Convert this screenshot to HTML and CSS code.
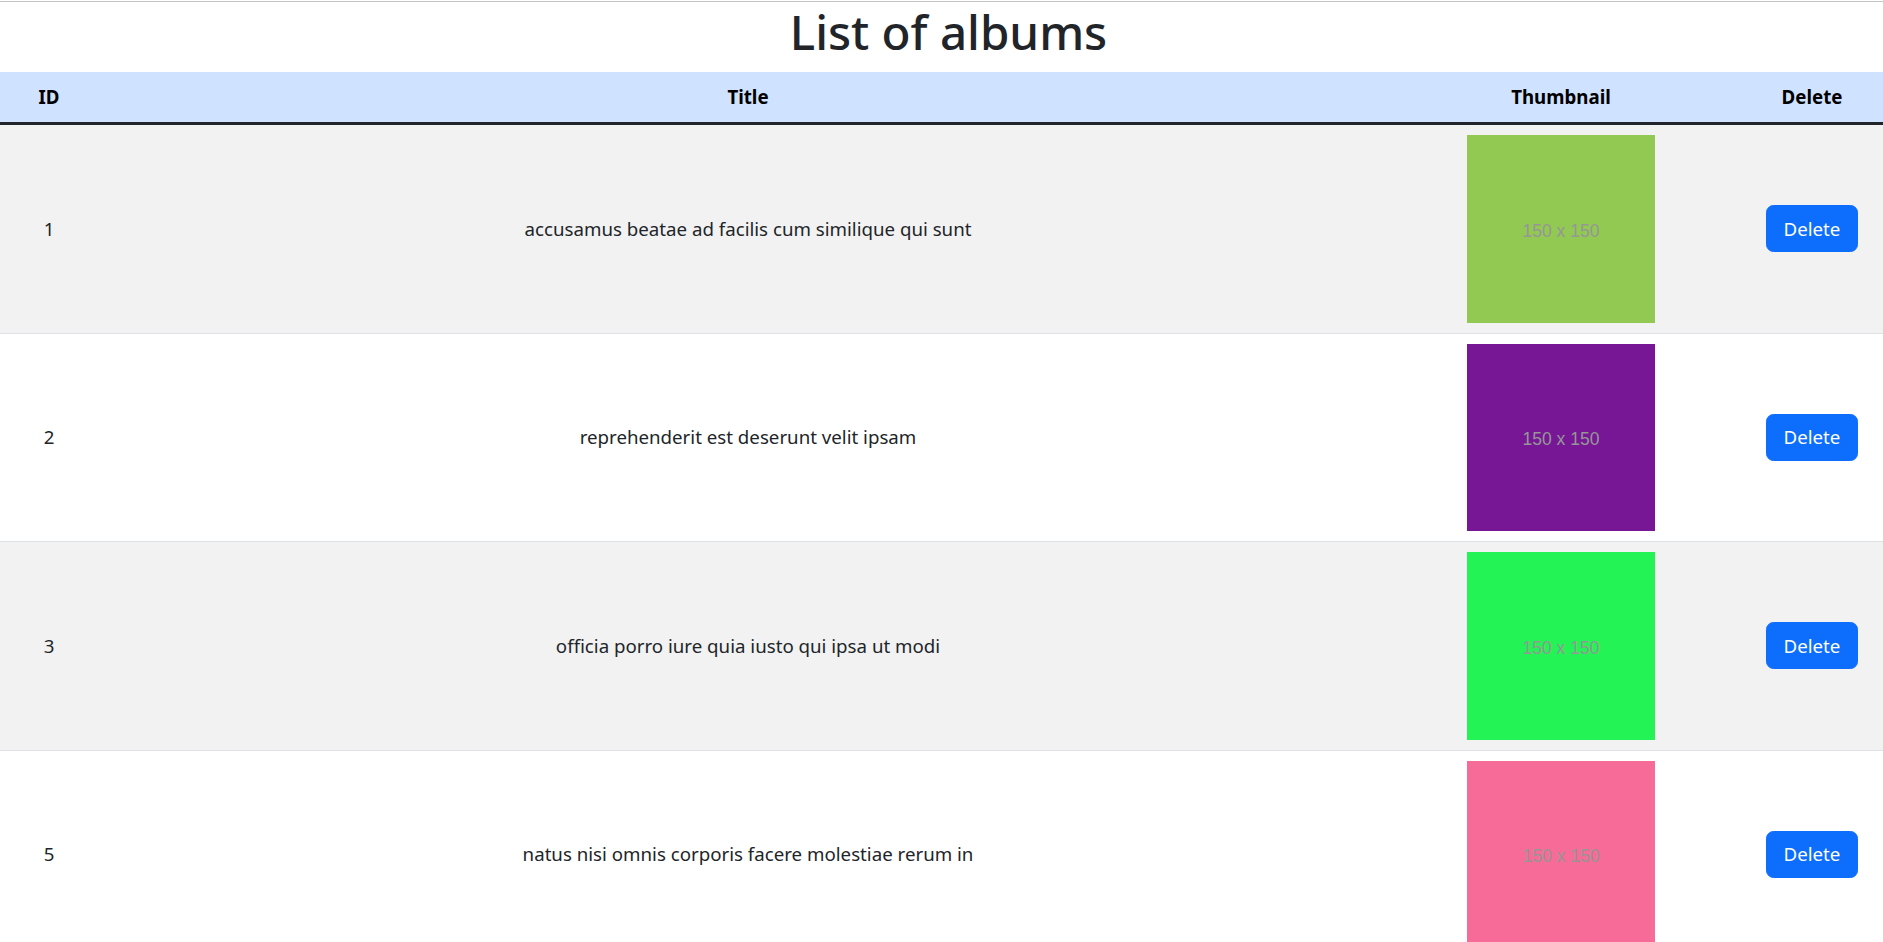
FILE: index.html
```html
<!DOCTYPE html>
<html lang="en">
<head>
<meta charset="utf-8">
<title>List of albums</title>
<link rel="stylesheet" href="styles.css">
</head>
<body>
<div class="topline"></div>
<h1 class="page-title">List of albums</h1>
<table class="albums">
  <colgroup>
    <col class="c-id">
    <col class="c-title">
    <col class="c-thumb">
    <col class="c-del">
  </colgroup>
  <thead>
    <tr><th>ID</th><th>Title</th><th class="thumb-cell">Thumbnail</th><th>Delete</th></tr>
  </thead>
  <tbody>
    <tr>
      <td>1</td>
      <td>accusamus beatae ad facilis cum similique qui sunt</td>
      <td class="thumb-cell"><div class="thumb" style="background:#92c952">150 x 150</div></td>
      <td><button class="btn">Delete</button></td>
    </tr>
    <tr>
      <td>2</td>
      <td>reprehenderit est deserunt velit ipsam</td>
      <td class="thumb-cell"><div class="thumb" style="background:#771796">150 x 150</div></td>
      <td><button class="btn">Delete</button></td>
    </tr>
    <tr>
      <td>3</td>
      <td>officia porro iure quia iusto qui ipsa ut modi</td>
      <td class="thumb-cell"><div class="thumb" style="background:#24f355">150 x 150</div></td>
      <td><button class="btn">Delete</button></td>
    </tr>
    <tr>
      <td>5</td>
      <td>natus nisi omnis corporis facere molestiae rerum in</td>
      <td class="thumb-cell"><div class="thumb" style="background:#f66b97">150 x 150</div></td>
      <td><button class="btn">Delete</button></td>
    </tr>
  </tbody>
</table>
</body>
</html>
```

FILE: styles.css
```css
html, body {
  margin: 0;
  padding: 0;
  background: #fff;
}
body {
  font-family: "Noto Sans", "Open Sans", Arial, sans-serif;
  font-size: 18.7px;
  line-height: 30px;
  color: #212529;
}
.topline {
  margin-top: 1px;
  height: 1px;
  background: #c4c4c4;
}
.page-title {
  margin: 0 0 10px 0;
  padding-left: 14px;
  font-size: 47.5px;
  font-weight: 500;
  line-height: 60px;
  text-align: center;
  color: #212529;
}
.albums {
  width: 100%;
  border-collapse: collapse;
  table-layout: fixed;
}
.c-id { width: 98px; }
.c-title { width: 1300px; }
.c-thumb { width: 343px; }
.c-del { width: 142px; }

.albums th {
  background: #cfe2ff;
  color: #000;
  font-weight: 700;
  text-align: center;
  padding: 10px;
  line-height: 30px;
  border-bottom: 3px solid #212529;
}
.albums td {
  padding: 10px;
  text-align: center;
  vertical-align: middle;
  border-bottom: 1px solid #dee2e6;
  line-height: 30px;
}
.albums tbody tr:nth-child(odd) td {
  background: #f2f2f2;
}
.albums .thumb-cell {
  padding-right: 27px;
}
.thumb {
  width: 188px;
  height: 187.5px;
  margin: 0 auto;
  display: flex;
  align-items: center;
  justify-content: center;
  box-sizing: border-box;
  padding-top: 4px;
  font-family: "Liberation Sans", Arial, sans-serif;
  font-size: 17.5px;
  color: #969696;
}
.btn {
  font-family: inherit;
  font-size: 18.7px;
  line-height: 30px;
  padding: 7.5px 16.5px;
  border: 1.25px solid #0d6efd;
  border-radius: 7.5px;
  background: #0d6efd;
  color: #fff;
  cursor: pointer;
}
```
